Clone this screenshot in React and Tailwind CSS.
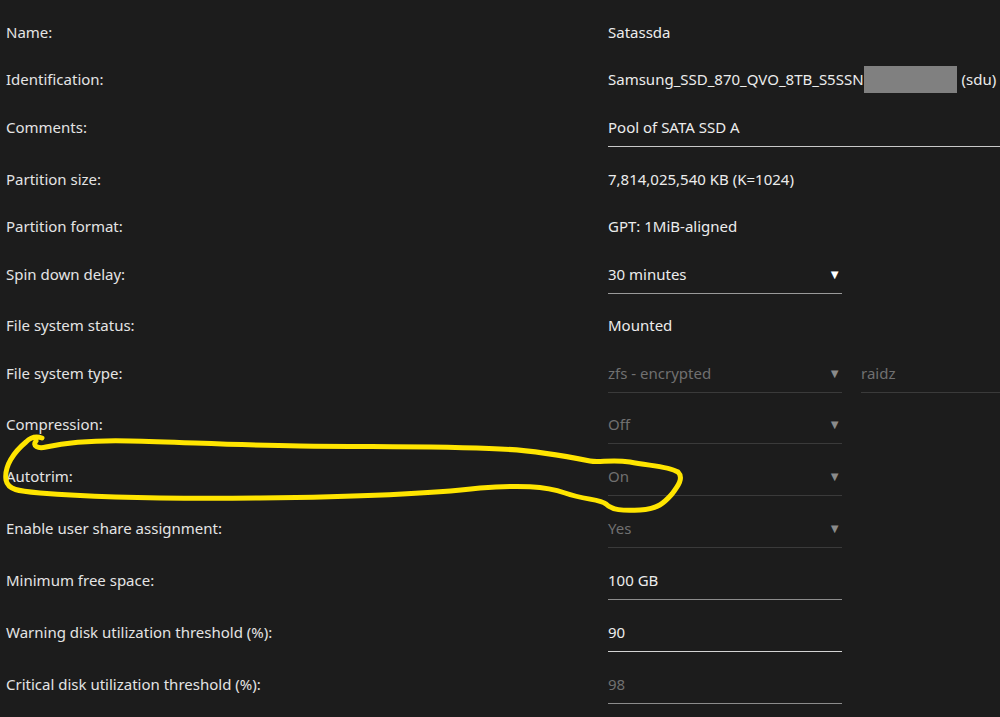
import React from 'react';

const rows = [
  { label: 'Name:', h: 47, kind: 'text', value: 'Satassda' },
  { label: 'Identification:', h: 48, kind: 'ident' },
  { label: 'Comments:', h: 52, kind: 'input', value: 'Pool of SATA SSD A', line: 'border-[#c8c8c8]', wide: true },
  { label: 'Partition size:', h: 47, kind: 'text', value: '7,814,025,540 KB (K=1024)' },
  { label: 'Partition format:', h: 48, kind: 'text', value: 'GPT: 1MiB-aligned' },
  { label: 'Spin down delay:', h: 51, kind: 'select', value: '30 minutes', line: 'border-[#9a9a9a]' },
  { label: 'File system status:', h: 48, kind: 'text', value: 'Mounted' },
  { label: 'File system type:', h: 51, kind: 'fstype' },
  { label: 'Compression:', h: 52, kind: 'select', value: 'Off', disabled: true },
  { label: 'Autotrim:', h: 52, kind: 'select', value: 'On', disabled: true },
  { label: 'Enable user share assignment:', h: 52, kind: 'select', value: 'Yes', disabled: true },
  { label: 'Minimum free space:', h: 52, kind: 'input', value: '100 GB', line: 'border-[#8c8c8c]' },
  { label: 'Warning disk utilization threshold (%):', h: 52, kind: 'input', value: '90', line: 'border-[#d4d4d4]' },
  { label: 'Critical disk utilization threshold (%):', h: 52, kind: 'input', value: '98', line: 'border-[#8c8c8c]', dim: true },
];

function Value({ row }) {
  if (row.kind === 'text') {
    return <div className="pt-[14px] leading-5 text-[#ececec]">{row.value}</div>;
  }
  if (row.kind === 'ident') {
    return (
      <div className="pt-[14px] leading-5 text-[#ececec] flex items-center">
        <span>Samsung_SSD_870_QVO_8TB_S5SSN</span>
        <span className="inline-block w-[93px] h-[27px] -my-[4px] bg-[#808080]" />
        <span className="ml-[5px]">(sdu)</span>
      </div>
    );
  }
  if (row.kind === 'input') {
    return (
      <div className={`pt-[14px] pb-[9px] leading-5 border-b ${row.line} ${row.wide ? 'w-[392px]' : 'w-[234px]'} ${row.dim ? 'text-[#707070]' : 'text-[#ececec]'}`}>
        {row.value}
      </div>
    );
  }
  if (row.kind === 'select') {
    const dis = row.disabled;
    return (
      <div className={`w-[234px] pt-[14px] pb-[9px] leading-5 border-b flex justify-between ${dis ? 'border-[#3a3a3a] text-[#707070]' : `${row.line} text-[#ececec]`}`}>
        <span>{row.value}</span>
        <span className={`text-[13px] pr-[1px] ${dis ? 'text-[#8a8a8a]' : 'text-white'}`}>▼</span>
      </div>
    );
  }
  // fstype
  return (
    <div className="flex gap-[19px]">
      <div className="w-[234px] pt-[14px] pb-[9px] leading-5 border-b border-[#3a3a3a] text-[#707070] flex justify-between">
        <span>zfs - encrypted</span>
        <span className="text-[13px] pr-[1px] text-[#8a8a8a]">▼</span>
      </div>
      <div className="w-[139px] pt-[14px] pb-[9px] leading-5 border-b border-[#3a3a3a] text-[#707070]">raidz</div>
    </div>
  );
}

export default function App() {
  return (
    <div className="relative w-[1000px] h-[717px] overflow-hidden bg-[#1c1c1c] text-[15px] font-['Noto_Sans',sans-serif]">
      <div className="pt-[8px] flex flex-col">
        {rows.map((r, i) => (
          <div key={i} className="flex items-start" style={{ height: r.h }}>
            <div className="w-[608px] pl-[6px] pt-[14px] leading-5 text-[#e4e4e4] shrink-0">{r.label}</div>
            <Value row={r} />
          </div>
        ))}
      </div>

      {/* hand-drawn highlight */}
      <svg className="absolute inset-0 pointer-events-none" width="1000" height="717" viewBox="0 0 1000 717">
        <path
          d="M42 438 C36 436 30 438 26 442 C14 452 4 466 6 480 C8 490 18 491 40 493 C90 497 170 499 260 498 C350 497 420 495 480 488 C520 485 545 486 565 493 C585 500 600 499 606 504 C612 510 622 511 640 510 C658 509 664 503 672 494 C678 486 684 478 678 472 C668 466 650 466 630 462 C610 459 600 463 590 461 C560 455 530 450 500 449 C440 446 380 447 300 446 C230 445 180 442 130 441 C90 440 60 444 46 447 C38 449 32 446 36 441"
          fill="none"
          stroke="#ffe500"
          strokeWidth="5"
          strokeLinecap="round"
          strokeLinejoin="round"
        />
      </svg>
    </div>
  );
}
